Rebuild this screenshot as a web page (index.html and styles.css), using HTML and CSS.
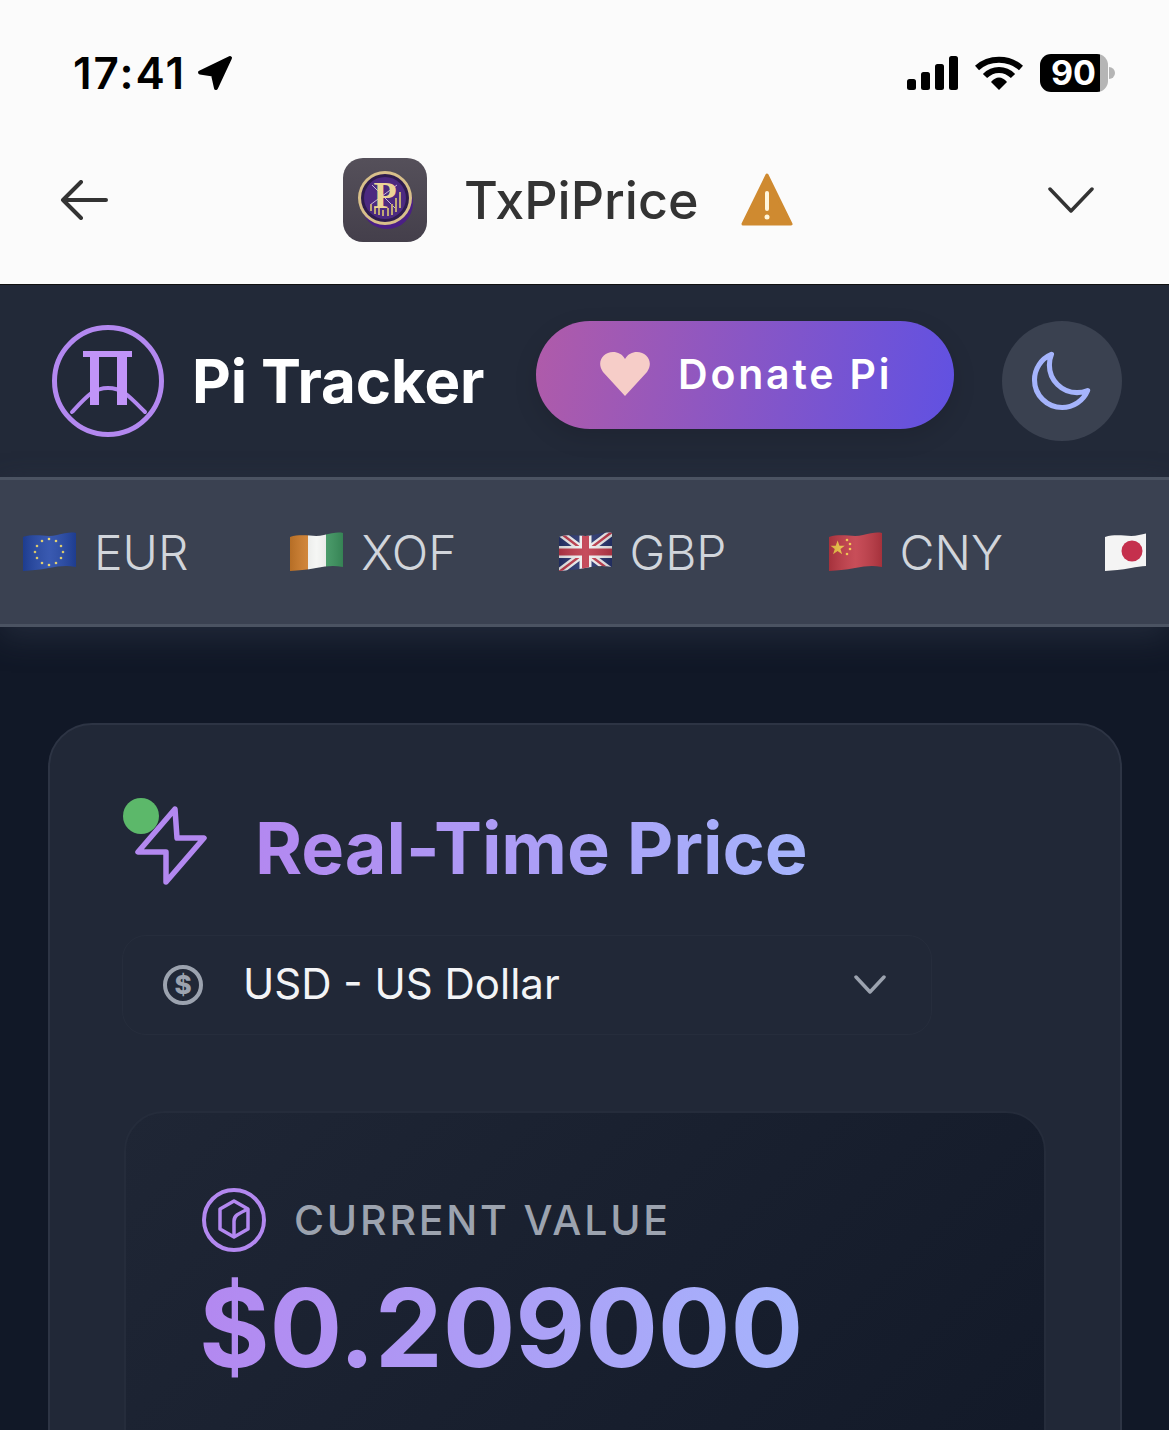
FILE: index.html
```html
<!DOCTYPE html>
<html>
<head>
  <title>Pi Tracker</title>
  <link rel="stylesheet" href="styles.css">
</head>
<body>
  <div class="phone-top">
    <div class="status-bar">
      <span class="clock">17:41</span>
      <svg class="location" viewBox="0 0 36 36"><path d="M33 3 3 17.500 16 19.500 19 33Z" fill="#000" stroke="#000" stroke-width="4" stroke-linejoin="round"/></svg>
      <div class="status-icons">
        <svg class="signal" viewBox="0 0 51 34">
          <rect x="0" y="23" width="9" height="11" rx="2.500"/>
          <rect x="14" y="16" width="9" height="18" rx="2.500"/>
          <rect x="28" y="8" width="9" height="26" rx="2.500"/>
          <rect x="42" y="0" width="9" height="34" rx="2.500"/>
        </svg>
        <svg class="wifi" viewBox="0 0 48 34">
          <path d="M2 12C14 1 34 1 46 12" fill="none" stroke="#000" stroke-width="6"/>
          <path d="M10 20C18 12 30 12 38 20" fill="none" stroke="#000" stroke-width="6"/>
          <path d="M16 26C21 20 27 20 32 26L24 34Z"/>
        </svg>
        <div class="battery">
          <div class="battery-body">90</div>
          <div class="battery-nub"></div>
        </div>
      </div>
    </div>
    <div class="nav-bar">
      <svg class="back" viewBox="0 0 48 40"><path d="M46 20H3M21 2 3 20l18 18" fill="none" stroke="#333" stroke-width="4" stroke-linecap="round" stroke-linejoin="round"/></svg>
      <svg class="app-icon" viewBox="0 0 84 84">
        <defs><linearGradient id="icon-bg" x1="0" y1="0" x2="0" y2="1"><stop offset="0" stop-color="#55505a"/><stop offset="1" stop-color="#443f4b"/></linearGradient></defs>
        <rect width="84" height="84" rx="20" fill="url(#icon-bg)"/>
        <circle cx="44" cy="45" r="26" fill="#4b1f86"/>
        <circle cx="42" cy="40" r="27" fill="#d8c08a"/>
        <circle cx="42" cy="40" r="24" fill="#2e1c4e"/>
        <circle cx="42" cy="40" r="21" fill="#4c2a80"/>
        <path d="M27 47 54 27M29 27 52 50" stroke="#c9b7d8" stroke-width="1"/>
        <path d="M28 53V46M32 56V48M36 57V50M40 58V52M45 58V50M49 57V46M53 54V40M57 50V34" stroke="#bfa974" stroke-width="2"/>
        <text class="app-icon-letter" x="42" y="50" text-anchor="middle">P</text>
      </svg>
      <span class="app-name">TxPiPrice</span>
      <svg class="warning" viewBox="0 0 52 54">
        <path d="M26 2 50 51H2Z" fill="#cf8a30" stroke="#cf8a30" stroke-width="3" stroke-linejoin="round"/>
        <path d="M26 20V36" stroke="#fff6dc" stroke-width="4" stroke-linecap="round"/>
        <circle cx="26" cy="44" r="2.500" fill="#fff6dc"/>
      </svg>
      <svg class="nav-chevron" viewBox="0 0 46 26"><path d="M2 2 23 24 44 2" fill="none" stroke="#333" stroke-width="3.500" stroke-linecap="round" stroke-linejoin="round"/></svg>
    </div>
  </div>

  <header class="app-header">
    <svg class="logo" viewBox="0 0 112 112">
      <circle cx="56" cy="56" r="53.500" fill="none" stroke="#b388f0" stroke-width="5"/>
      <path d="M20 87C36 70 42 63 56 63S76 70 93 87" fill="none" stroke="#b388f0" stroke-width="4" stroke-linecap="round"/>
      <path d="M31 26H80V32H75V80H65V32H47V80H38V32H31Z" fill="#c194f8"/>
    </svg>
    <span class="brand">Pi Tracker</span>
    <button class="donate">
      <svg class="heart" viewBox="0 0 52 44"><path d="M26 44 4 20C-3 10 4 0 14 0c5 0 9 2 12 7 3-5 7-7 12-7 10 0 17 10 10 20Z" fill="#f6cdc8"/></svg>
      Donate Pi
    </button>
    <button class="theme">
      <svg class="moon" viewBox="0 0 24 24"><path d="M21.752 15.002A9.718 9.718 0 0 1 18 15.750c-5.385 0-9.750-4.365-9.750-9.750 0-1.330.266-2.597.748-3.752A9.753 9.753 0 0 0 3 11.250C3 16.635 7.365 21 12.750 21a9.753 9.753 0 0 0 9.002-5.998Z" fill="none" stroke="#a5b4fc" stroke-width="1.800" stroke-linejoin="round"/></svg>
    </button>
  </header>

  <div class="ticker">
    <div class="ticker-item">
      <svg class="flag" viewBox="0 0 53 40">
        <defs>
          <clipPath id="wave"><path d="M0 5C14 1 24 6 34 3 42 1 48 0 53 1V35C44 33 36 34 26 36 16 38 8 38 0 39Z"/></clipPath>
          <linearGradient id="shade" x1="0" y1="0" x2="1" y2="0">
            <stop offset="0" stop-color="#000" stop-opacity="0.15"/>
            <stop offset="0.5" stop-color="#fff" stop-opacity="0.1"/>
            <stop offset="1" stop-color="#000" stop-opacity="0.15"/>
          </linearGradient>
        </defs>
        <g clip-path="url(#wave)">
          <rect width="53" height="40" fill="#2347a8"/>
          <g fill="#e6d26a">
            <circle cx="26" cy="7" r="1.300"/><circle cx="33" cy="9" r="1.300"/><circle cx="38" cy="14" r="1.300"/><circle cx="40" cy="20" r="1.300"/><circle cx="38" cy="26" r="1.300"/><circle cx="33" cy="31" r="1.300"/>
            <circle cx="26" cy="33" r="1.300"/><circle cx="19" cy="31" r="1.300"/><circle cx="14" cy="26" r="1.300"/><circle cx="12" cy="20" r="1.300"/><circle cx="14" cy="14" r="1.300"/><circle cx="19" cy="9" r="1.300"/>
          </g>
          <rect width="53" height="40" fill="url(#shade)"/>
        </g>
      </svg>
      <span>EUR</span>
    </div>
    <div class="ticker-item">
      <svg class="flag" viewBox="0 0 53 40">
        <g clip-path="url(#wave)">
          <rect width="18" height="40" fill="#d6812c"/>
          <rect x="18" width="18" height="40" fill="#f4f5f3"/>
          <rect x="36" width="17" height="40" fill="#3f9a63"/>
          <rect width="53" height="40" fill="url(#shade)"/>
        </g>
      </svg>
      <span>XOF</span>
    </div>
    <div class="ticker-item">
      <svg class="flag" viewBox="0 0 53 40">
        <g clip-path="url(#wave)">
          <rect width="53" height="40" fill="#27346f"/>
          <path d="M0 0 53 40M53 0 0 40" stroke="#f2f2f2" stroke-width="7"/>
          <path d="M0 0 53 40M53 0 0 40" stroke="#c0394b" stroke-width="2.500"/>
          <path d="M26.500 0V40M0 20H53" stroke="#f2f2f2" stroke-width="12"/>
          <path d="M26.500 0V40M0 20H53" stroke="#c0394b" stroke-width="7"/>
          <rect width="53" height="40" fill="url(#shade)"/>
        </g>
      </svg>
      <span>GBP</span>
    </div>
    <div class="ticker-item">
      <svg class="flag" viewBox="0 0 53 40">
        <g clip-path="url(#wave)">
          <rect width="53" height="40" fill="#c23a46"/>
          <path d="M8 10 10 15.500H15.500L11 19 12.800 24.500 8 21 3.200 24.500 5 19 .5 15.500H6Z" transform="translate(1 -1) scale(.95)" fill="#f7c948"/>
          <circle cx="18" cy="8" r="1.300" fill="#f7c948"/><circle cx="21" cy="12" r="1.300" fill="#f7c948"/><circle cx="21" cy="17" r="1.300" fill="#f7c948"/><circle cx="18" cy="22" r="1.300" fill="#f7c948"/>
          <rect width="53" height="40" fill="url(#shade)"/>
        </g>
      </svg>
      <span>CNY</span>
    </div>
    <div class="ticker-item">
      <svg class="flag flag-cut" viewBox="0 0 41 40">
        <g clip-path="url(#wave)">
          <rect width="41" height="40" fill="#f4f4f4"/>
          <circle cx="27" cy="19" r="10.500" fill="#c5304d"/>
        </g>
      </svg>
    </div>
  </div>

  <main class="content">
    <section class="card">
      <div class="card-title">
        <div class="bolt-wrap">
          <svg class="bolt" viewBox="0 0 84 84"><path d="M45 5 8 48H36L36 78 74 34H47Z" fill="none" stroke="#b388f0" stroke-width="5.500" stroke-linejoin="round"/></svg>
          <span class="live-dot"></span>
        </div>
        <h1>Real-Time Price</h1>
      </div>

      <div class="currency-select">
        <svg class="dollar" viewBox="0 0 40 40">
          <circle cx="20" cy="20" r="18" fill="none" stroke="#9ca3af" stroke-width="4"/>
          <text class="dollar-sign" x="20" y="29" text-anchor="middle">$</text>
        </svg>
        <span class="currency-name">USD - US Dollar</span>
        <svg class="select-chevron" viewBox="0 0 32 20"><path d="M2 2 16 17 30 2" fill="none" stroke="#9ca3af" stroke-width="3.500" stroke-linecap="round" stroke-linejoin="round"/></svg>
      </div>

      <div class="value-card">
        <div class="value-label">
          <svg class="cube" viewBox="0 0 64 64">
            <circle cx="32" cy="32" r="30" fill="none" stroke="#b388f0" stroke-width="4"/>
            <path d="M32 13 46 21V41L32 49 18 41V21Z" fill="none" stroke="#b388f0" stroke-width="3.500" stroke-linejoin="round"/>
            <path d="M32 49V33C32 27 38 25 46 21" fill="none" stroke="#b388f0" stroke-width="3.500"/>
          </svg>
          <span>CURRENT VALUE</span>
        </div>
        <div class="value-price">$0.209000</div>
      </div>
    </section>
  </main>
</body>
</html>
```

FILE: styles.css
```css
* {
  box-sizing: border-box;
}

body {
  font-family: Inter, "Liberation Sans", sans-serif;
  background-color: #111827;
  margin: 0;
  padding: 0;
  width: 1169px;
  height: 1430px;
  overflow: hidden;
}

svg {
  display: block;
  flex-shrink: 0;
}

/* Phone chrome */
.phone-top {
  height: 285px;
  background-color: #fbfbfb;
  border-bottom: 1px solid #111;
}

.status-bar {
  display: flex;
  align-items: center;
  height: 145px;
  padding: 0 54px 0 73px;
}

.clock {
  font-size: 44px;
  font-weight: 600;
  letter-spacing: 2px;
  color: #000;
}

.location {
  width: 36px;
  height: 36px;
  margin-left: 11px;
}

.status-icons {
  display: flex;
  align-items: center;
  margin-left: auto;
}

.signal {
  width: 51px;
  height: 34px;
}

.wifi {
  width: 48px;
  height: 34px;
  margin-left: 17px;
}

.battery {
  display: flex;
  align-items: center;
  margin-left: 17px;
}

.battery-body {
  width: 68px;
  height: 38px;
  border-radius: 11px;
  background: linear-gradient(to right, #000 88%, #b5b5b5 88%);
  color: #fff;
  font-size: 34px;
  font-weight: 700;
  line-height: 38px;
  padding-left: 11px;
}

.battery-nub {
  width: 6px;
  height: 12px;
  margin-left: 1px;
  background-color: #b5b5b5;
  border-radius: 0 6px 6px 0;
}

.nav-bar {
  display: flex;
  align-items: center;
  height: 110px;
  padding: 0 75px 0 60px;
}

.back {
  width: 48px;
  height: 40px;
}

.app-icon {
  width: 84px;
  height: 84px;
  margin-left: 235px;
}

.app-icon-letter {
  font-family: "Liberation Serif", serif;
  font-size: 38px;
  font-weight: 700;
  fill: #ecd596;
}

.app-name {
  font-size: 52px;
  font-weight: 500;
  color: #333;
  margin-left: 37px;
}

.warning {
  width: 52px;
  height: 54px;
  margin-left: 43px;
}

.nav-chevron {
  width: 46px;
  height: 26px;
  margin-left: auto;
}

/* App header */
.app-header {
  display: flex;
  align-items: center;
  height: 192px;
  padding: 0 47px 0 52px;
  background-color: #222938;
}

.logo {
  width: 112px;
  height: 112px;
}

.brand {
  color: #fff;
  font-size: 60px;
  font-weight: 700;
  letter-spacing: -0.1px;
  margin-left: 28px;
}

.donate {
  display: flex;
  align-items: center;
  gap: 27px;
  width: 418px;
  height: 108px;
  margin: 0 0 12px auto;
  padding: 0 0 2px 63px;
  border: none;
  border-radius: 54px;
  background: linear-gradient(100deg, #b05ba9, #6051e2);
  box-shadow: 0 8px 24px rgba(0, 0, 0, 0.12);
  color: #fff;
  font-family: inherit;
  font-size: 41px;
  font-weight: 600;
  letter-spacing: 2.800px;
}

.heart {
  width: 52px;
  height: 44px;
}

.theme {
  display: flex;
  align-items: center;
  justify-content: center;
  width: 120px;
  height: 120px;
  margin-left: 48px;
  padding: 2px 4px 0 0;
  border: none;
  border-radius: 50%;
  background-color: #3a4150;
}

.moon {
  width: 68px;
  height: 68px;
}

/* Currency strip */
.ticker {
  display: flex;
  align-items: center;
  gap: 102px;
  height: 150px;
  padding-left: 23px;
  overflow: hidden;
  background-color: #3a4151;
  border-top: 3px solid #4b5362;
  border-bottom: 3px solid #4b5362;
  box-shadow: 0 10px 30px rgba(55, 65, 81, 0.45);
}

.ticker-item {
  display: flex;
  align-items: center;
  gap: 18px;
  flex-shrink: 0;
  color: #d1d5db;
  font-size: 48px;
  font-weight: 300;
}

.flag {
  width: 53px;
  height: 40px;
}

.flag-cut {
  width: 41px;
}

/* Main card */
.content {
  padding: 96px 47px 0 48px;
}

.card {
  height: 800px;
  padding: 79px 75px 0 72px;
  background-color: #212837;
  border: 2px solid #2d3444;
  border-radius: 44px;
}

.card-title {
  display: flex;
  align-items: flex-start;
  gap: 41px;
  padding-left: 8px;
}

.bolt-wrap {
  position: relative;
  width: 84px;
  height: 84px;
}

.bolt {
  width: 84px;
  height: 84px;
}

.live-dot {
  position: absolute;
  left: -7px;
  top: -6px;
  width: 36px;
  height: 36px;
  border-radius: 50%;
  background-color: #5cb86a;
}

h1 {
  margin: 2px 0 0;
  font-size: 72px;
  font-weight: 700;
  line-height: 84px;
  letter-spacing: -0.1px;
  background: linear-gradient(90deg, #b388f0, #a5b4fc);
  -webkit-background-clip: text;
  background-clip: text;
  color: transparent;
}

.currency-select {
  display: flex;
  align-items: center;
  width: 810px;
  height: 100px;
  margin-top: 45px;
  padding: 0 45px 0 40px;
  border: 1px solid #262d3c;
  border-radius: 24px;
}

.dollar {
  width: 40px;
  height: 40px;
}

.dollar-sign {
  font-size: 26px;
  font-weight: 800;
  fill: #9ca3af;
}

.currency-name {
  margin-left: 40px;
  padding-bottom: 4px;
  color: #f3f4f6;
  font-size: 42px;
}

.select-chevron {
  width: 32px;
  height: 20px;
  margin-left: auto;
}

.value-card {
  width: 922px;
  height: 500px;
  margin: 76px 0 0 2px;
  padding: 75px 0 0 76px;
  background: linear-gradient(135deg, #1f2635, #111827);
  border: 2px solid #252c3b;
  border-radius: 40px;
}

.value-label {
  display: flex;
  align-items: center;
  gap: 28px;
  color: #9ca3af;
  font-size: 41px;
  font-weight: 500;
  letter-spacing: 2.800px;
}

.cube {
  width: 64px;
  height: 64px;
}

.value-price {
  width: max-content;
  margin: 11px 0 0 -3px;
  font-size: 108px;
  font-weight: 700;
  line-height: 130px;
  letter-spacing: -0.2px;
  background: linear-gradient(90deg, #b388f0, #a5b4fc);
  -webkit-background-clip: text;
  background-clip: text;
  color: transparent;
}
```
